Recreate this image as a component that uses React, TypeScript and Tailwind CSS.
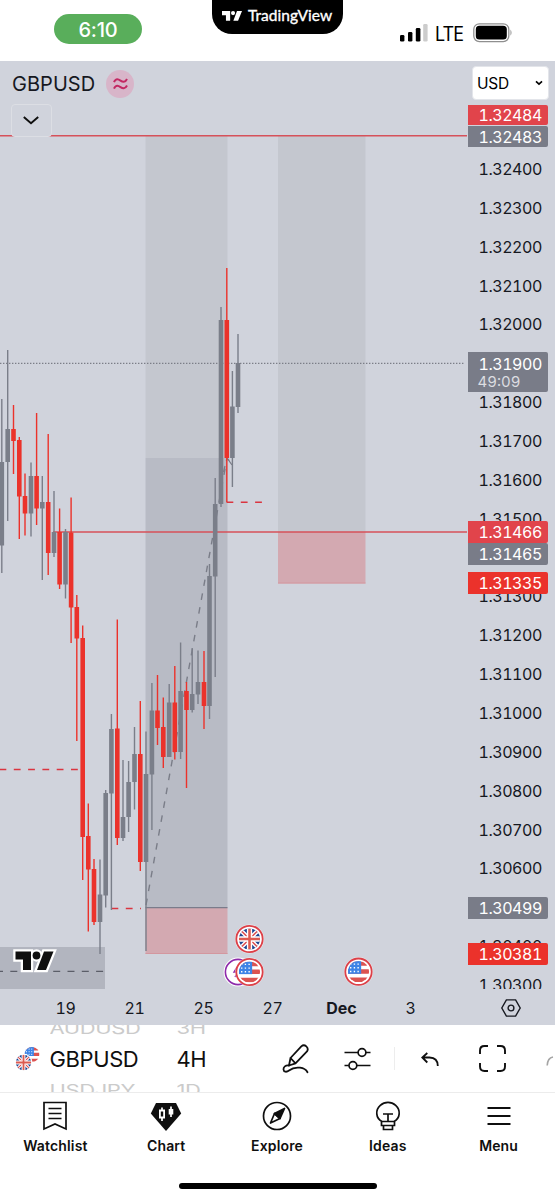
import type { ReactNode } from 'react';

type Candle = { x: number; high: number; low: number; top: number; bottom: number; up: boolean };

const UP = '#7a7e89';
const DOWN = '#eb322b';

// x, wick top, wick bottom, body top, body bottom, direction
const RAW: [number, number, number, number, number, 'u' | 'd'][] = [
  [1.8, 399, 573, 462, 545.5, 'u'],
  [7.7, 350, 521, 429, 462, 'u'],
  [13.5, 405, 474, 429, 441, 'd'],
  [19.3, 437, 539, 440, 496.5, 'd'],
  [25, 473.5, 535.5, 496, 513.5, 'd'],
  [31, 462.5, 536.5, 476, 513.5, 'u'],
  [36.6, 413, 525, 476, 508.5, 'd'],
  [42.3, 476, 580, 502, 508.5, 'u'],
  [48.2, 434, 575, 502, 553, 'd'],
  [54, 491, 557, 532, 553, 'u'],
  [59.6, 508.5, 589, 532, 584.5, 'd'],
  [65.5, 529, 598.5, 532, 584.5, 'u'],
  [71.1, 497.5, 643, 532.5, 607.5, 'd'],
  [76.8, 595, 741, 607, 638.5, 'd'],
  [82.7, 625.5, 880, 638, 837, 'd'],
  [88.3, 803.5, 931.5, 836, 869.5, 'd'],
  [94, 859, 925, 869, 922, 'd'],
  [100, 859.5, 954, 894.5, 922, 'u'],
  [105.7, 790, 907.5, 793, 895.5, 'u'],
  [111.4, 714, 910, 729, 793.5, 'u'],
  [117.3, 619.5, 845, 728.5, 838, 'd'],
  [123, 760, 841, 817, 838, 'u'],
  [128.6, 761, 832, 782, 817, 'u'],
  [134.5, 727, 809.5, 754, 782, 'u'],
  [140.3, 701, 871, 754, 862, 'd'],
  [146, 731.5, 951, 774, 862, 'u'],
  [151.9, 683, 830, 710.5, 774.5, 'u'],
  [157.5, 675, 745, 710.5, 728, 'd'],
  [163.3, 697.5, 768, 727, 757, 'd'],
  [169.2, 684, 757, 702.5, 757, 'u'],
  [174.8, 666, 759.5, 702.5, 752, 'd'],
  [180.6, 642.5, 759, 691, 752, 'u'],
  [186.5, 682, 788, 691, 710, 'd'],
  [192.2, 648, 712.5, 694, 710, 'u'],
  [198, 650.5, 704, 682, 694.5, 'u'],
  [204, 651, 729, 682, 706, 'd'],
  [209.5, 564, 719, 576, 706, 'u'],
  [215.2, 478, 677, 504, 576.5, 'u'],
  [221, 307, 507, 320, 504, 'u'],
  [226.8, 268, 502, 320, 458, 'd'],
  [232.4, 371, 487, 406.5, 458, 'u'],
  [238, 334, 413, 363, 407, 'u'],
];

const candles: Candle[] = RAW.map(([x, high, low, top, bottom, dir]) => ({
  x, high, low, top, bottom, up: dir === 'u',
}));

const ticks = Array.from({ length: 22 }, (_, i) => (1.324 - i * 0.001).toFixed(5));

const tags = [
  { price: '1.32484', place: 'top-[44px] h-[20px] bg-[#e1444b]' },
  { price: '1.32483', place: 'top-[65px] h-[21px] bg-[#797c88]' },
  { price: '1.31466', place: 'top-[460px] h-[22px] bg-[#e1444b]' },
  { price: '1.31465', place: 'top-[482px] h-[22px] bg-[#797c88]' },
  { price: '1.31335', place: 'top-[511px] h-[22px] bg-[#eb322b]' },
  { price: '1.30499', place: 'top-[836px] h-[22px] bg-[#797c88]' },
  { price: '1.30381', place: 'top-[882px] h-[22px] bg-[#eb322b]' },
];

function UkFlag({ id, r }: { id: string; r: number }) {
  return (
    <g>
      <clipPath id={id}><circle r={r} /></clipPath>
      <g clipPath={`url(#${id})`}>
        <g transform={`scale(${r / 10})`}>
          <rect x="-10" y="-10" width="20" height="20" fill="#1c4591" />
          <path d="M-10-10 10 10M10-10-10 10" stroke="#fff" strokeWidth="4" />
          <path d="M-10-10 10 10M10-10-10 10" stroke="#dc4a4c" strokeWidth="1.3" />
          <path d="M0-10V10M-10 0H10" stroke="#fff" strokeWidth="5" />
          <path d="M0-10V10M-10 0H10" stroke="#dc5a50" strokeWidth="2.4" />
        </g>
      </g>
    </g>
  );
}

function UsFlag({ id, r }: { id: string; r: number }) {
  return (
    <g>
      <clipPath id={id}><circle r={r} /></clipPath>
      <g clipPath={`url(#${id})`}>
        <g transform={`scale(${r / 10})`}>
          <rect x="-10" y="-10" width="20" height="20" fill="#fff" />
          <path d="M-10-7.6H10M-10-.2H10M-10 7.6H10" stroke="#dc5350" strokeWidth="4.2" />
          <rect x="-10" y="-10" width="12.5" height="12" fill="#3d84e6" />
          <path d="M-8-7.2H2M-8-3.7H2M-8-.2H2" stroke="#fff" strokeWidth="1.3" strokeDasharray="1.3 2.2" />
        </g>
      </g>
    </g>
  );
}

function EventPin({ x, y, children }: { x: number; y: number; children: ReactNode }) {
  return (
    <g transform={`translate(${x} ${y})`}>
      <circle r="14.6" fill="#fff" fillOpacity=".6" />
      <circle r="13.2" fill="#fff" stroke="#dc4048" strokeWidth="1.8" />
      {children}
    </g>
  );
}

// T, dot and slash of the brand mark on a 38x19 grid
function BrandShapes() {
  return (
    <>
      <path d="M0 0H15.5V18.5H7.5V8H0Z" />
      <circle cx="21" cy="4" r="3.9" />
      <path d="M28.5 0H38L30.5 18.5H21.5Z" />
    </>
  );
}

function Plot() {
  return (
    <svg className="block h-[928px] w-[467px]" viewBox="0 61 467 928">
      <rect x="145.5" y="135" width="82" height="323" fill="#c4c7cf" />
      <rect x="145.5" y="458" width="82" height="450" fill="#b8bbc5" />
      <rect x="145.5" y="908" width="82" height="46" fill="#d3a9b1" />
      <path d="M145.5 907.7H227.5" stroke="#7a7c8b" strokeWidth="1.2" />
      <path d="M145.5 953.5H227.5" stroke="#d3979f" strokeWidth="1" />
      <rect x="278" y="135" width="87.5" height="397" fill="#c4c7cf" />
      <rect x="278" y="532" width="87.5" height="51.5" fill="#d3a9b1" />
      <path d="M278 583H365.5" stroke="#d3979f" strokeWidth="1" />
      <rect x="0" y="947" width="105" height="42" fill="#b2b5bf" />
      <path d="M-4 971.3H105" stroke="#5b5e68" strokeWidth="1.2" strokeDasharray="7 7.3" />

      <path d="M0 135.8H467M53 532H467" stroke="#d6515a" strokeWidth="1.4" />
      <path d="M0 363.3H465" stroke="#7b7e87" strokeWidth="1.3" strokeDasharray="1.4 1.6" />
      <path d="M146 905 227 458 233 465" fill="none" stroke="#7a7d88" strokeWidth="1.4" strokeDasharray="6.5 7.6" />
      <g stroke="#da3540" strokeWidth="1.4" strokeDasharray="6.8 7.5">
        <path d="M-.5 769.5H79" />
        <path d="M111.5 908.5H141" />
        <path d="M226.5 502.3H263" />
      </g>

      {candles.map((c) => (
        <g key={c.x} fill={c.up ? UP : DOWN}>
          <rect x={c.x - 0.7} y={c.high} width="1.4" height={c.low - c.high} />
          <rect x={c.x - 2.3} y={c.top} width="4.6" height={c.bottom - c.top} />
        </g>
      ))}

      {/* last wiggle of the trend line stays visible over the bodies */}
      <path d="M223.5 472 225 466M228.5 460 232 465" stroke="#7a7d88" strokeWidth="1.3" />

      <g transform="translate(15.5 951.5)" fill="#0f0f0f">
        <g stroke="#fff" strokeWidth="4.5"><BrandShapes /></g>
        <BrandShapes />
      </g>

      <EventPin x={249.5} y={939}><UkFlag id="pin-uk" r={10.6} /></EventPin>
      <g transform="translate(238 972)">
        <circle r="14.4" fill="#fff" />
        <circle r="12.6" fill="#fff" stroke="#8e2bab" strokeWidth="1.6" />
        <path d="M-1-5-4 0H0L-3 5" fill="none" stroke="#8e2bab" strokeWidth="1.4" />
      </g>
      <EventPin x={249.5} y={972}><UsFlag id="pin-us-1" r={10.6} /></EventPin>
      <EventPin x={358.5} y={971.7}><UsFlag id="pin-us-2" r={10.6} /></EventPin>
    </svg>
  );
}

function StatusBar() {
  return (
    <header className="flex h-[61px] items-start">
      <div className="ml-[54px] mt-[14px] flex h-[30px] w-[88px] items-center justify-center rounded-full bg-[#59ae5b] pt-px text-[20px] font-medium tracking-[-0.2px] text-white">
        6:10
      </div>
      <div className="ml-[70px] flex h-[34px] w-[131px] items-center rounded-b-[20px] bg-black pl-[10px] text-white">
        <svg className="mt-[-3px] h-[10px] w-[20px] shrink-0" viewBox="0 0 38 19" fill="#fff" preserveAspectRatio="none">
          <BrandShapes />
        </svg>
        <span className="ml-[6px] mt-[-2px] whitespace-nowrap font-['Lato',sans-serif] text-[15.5px] leading-none tracking-[0.05px] [-webkit-text-stroke:0.35px_white]">
          TradingView
        </span>
      </div>
      <svg className="ml-[56px] mt-[23px] h-[19px] w-[29px]" viewBox="0 0 29 19">
        <rect x="1" y="12" width="4.4" height="6.5" rx="1.3" />
        <rect x="9" y="9" width="4.4" height="9.5" rx="1.3" />
        <rect x="16.8" y="5" width="4.6" height="13.5" rx="1.3" />
        <rect x="24.2" y="1" width="4.4" height="17.5" rx="1.3" fill="#ccc" />
      </svg>
      <span className="ml-[7px] mt-[22px] w-[28.5px] origin-left scale-x-[0.92] text-[19.5px] leading-6 tracking-[-1px]">LTE</span>
      <svg className="ml-[9px] mt-[23px] h-[20px] w-[40px]" viewBox="0 0 40 20">
        <rect x=".8" y=".8" width="35" height="17.8" rx="5.5" fill="#fff" stroke="#8f8f8f" strokeWidth="1.3" />
        <rect x="2.8" y="2.8" width="31" height="13.8" rx="3.6" />
        <path d="M37.5 6.5Q39.5 9.7 37.5 12.8Z" fill="#888" />
      </svg>
    </header>
  );
}

function PriceScale() {
  return (
    <div className="relative h-[928px] w-[88px] overflow-hidden text-[16px] tabular-nums tracking-[-0.45px] text-[#16181f]">
      <div className="ml-[5px] mt-[5px] flex h-[34px] w-[77px] items-center justify-between rounded-[4px] border border-[#e3e5ea] bg-white pl-[4px] pr-[5px] text-[15.5px] tracking-[-0.3px] text-black">
        <span className="mt-px">USD</span>
        <svg className="h-[6px] w-[8px]" viewBox="0 0 8 6" fill="none" stroke="#000" strokeWidth="1.6">
          <path d="M1 1.3 4 4.2 7 1.3" />
        </svg>
      </div>
      <div className="mt-[49.6px] flex flex-col">
        {ticks.map((t) => (
          <span key={t} className="flex h-[38.86px] shrink-0 items-center pl-[11.5px]">{t}</span>
        ))}
      </div>

      {tags.map((t) => (
        <div key={t.price} className={`absolute left-[1px] flex w-[80px] items-center rounded-r-[2px] pl-[10.5px] text-white ${t.place}`}>
          {t.price}
        </div>
      ))}
      <div className="absolute left-[1px] top-[291px] flex h-[40px] w-[80px] flex-col justify-center rounded-r-[2px] bg-[#797c88] pl-[10.5px] leading-[18px] text-white">
        <span className="mt-[2px]">1.31900</span>
        <span className="-ml-px text-[15px] tracking-normal text-[#dcdde1]">49:09</span>
      </div>
    </div>
  );
}

function ChartArea() {
  return (
    <section className="h-[964px] bg-[#d0d3dc]">
      <div className="relative flex">
        <Plot />
        <PriceScale />
        <div className="absolute left-[12px] top-[8px] flex items-center gap-[10px]">
          <span className="w-[84px] text-[20px] tracking-[0.05px] text-[#16181f]">GBPUSD</span>
          <span className="flex size-[28px] items-center justify-center rounded-full bg-[#d8b5c9]">
            <svg className="h-[12px] w-[15px]" viewBox="0 0 15 12" fill="none" stroke="#c32862" strokeWidth="2">
              <path d="M1 4.2C3-.2 5.5 1.2 7.5 2.6S12 5 14 1M1 10.7C3 6.3 5.5 7.7 7.5 9.1S12 11.5 14 7.5" />
            </svg>
          </span>
        </div>
        <div className="absolute left-[11px] top-[43px] flex h-[33px] w-[41px] items-center justify-center rounded-[4px] border border-[#dcdee4] bg-[#d0d3dc] pr-[1px]">
          <svg className="h-[9px] w-[16px]" viewBox="0 0 16 9" fill="none" stroke="#0f0f0f" strokeWidth="1.9">
            <path d="M.8 1 8 7.3 15.2 1" />
          </svg>
        </div>
      </div>
      <div className="flex h-[36px] items-center pl-[31px] pt-[2px] text-[16px] text-[#16181f]">
        {['19', '21', '25', '27', 'Dec', '3'].map((d) => (
          <span key={d} className={d === 'Dec' ? 'w-[69px] text-center font-bold' : 'w-[69px] text-center tabular-nums tracking-[-0.4px]'}>{d}</span>
        ))}
        <svg className="ml-[56px] h-[18px] w-[20px]" viewBox="0 0 20 18" fill="none" stroke="#16181f" strokeWidth="1.4">
          <path d="M5.4.9H14.6L19.2 9 14.6 17.1H5.4L.8 9Z" />
          <circle cx="10" cy="9" r="2.9" />
        </svg>
      </div>
    </section>
  );
}

function Wheel({ items, className }: { items: string[]; className: string }) {
  return (
    <div className={`flex h-[67px] flex-col justify-center overflow-hidden whitespace-nowrap pt-[2px] text-[22px] leading-[31px] ${className}`}>
      <span className="h-[31px] shrink-0 scale-y-[0.72] text-[#cbcbcb]">{items[0]}</span>
      <span className="h-[31px] shrink-0 text-[#0f0f0f]">{items[1]}</span>
      <span className="h-[31px] shrink-0 scale-y-[0.72] text-[#cbcbcb]">{items[2]}</span>
    </div>
  );
}

function Toolbar() {
  return (
    <div className="flex h-[68px] items-center overflow-hidden border-b border-[#ececec]">
      <svg className="ml-[15px] h-[26px] w-[26px] shrink-0" viewBox="0 0 26 26">
        <g transform="translate(17 8.5)"><UsFlag id="bar-us" r={7.5} /></g>
        <circle cx="8.5" cy="16.5" r="9" fill="#fff" />
        <g transform="translate(8.5 16.5)"><UkFlag id="bar-uk" r={7.7} /></g>
      </svg>
      <Wheel items={['AUDUSD', 'GBPUSD', 'USDJPY']} className="ml-[8.5px] w-[96px] shrink-0 tracking-[-0.4px]" />
      <Wheel items={['3H', '4H', '1D']} className="ml-[31px] w-[40px] shrink-0 tracking-[-0.35px]" />
      <svg className="ml-[65.5px] h-[30px] w-[28px] shrink-0" viewBox="0 0 28 30" fill="none" stroke="#0f0f0f" strokeWidth="1.8" strokeLinejoin="round" strokeLinecap="round">
        <path d="M8.5 14 19.3 2.400Q21.8.2 24.3 2.400T25 7.400L13.5 19.3 7 21.500ZM8.5 14 13.5 19.300" />
        <path d="M7 21.5C3.5 21 1.3 23 1.5 25.5S4.5 28.5 7 26.5C10.5 23.8 14.5 23.2 18 23.7S24 25.5 25.5 28.2" />
      </svg>
      <svg className="ml-[33.5px] mt-px h-[24px] w-[28px] shrink-0" viewBox="0 0 28 24" fill="none" stroke="#0f0f0f" strokeWidth="1.7">
        <path d="M.5 5.5H14M22 5.5H26.5M.5 18.5H4.8M13 18.5H26.5" />
        <circle cx="18" cy="5.5" r="3.9" />
        <circle cx="8.9" cy="18.5" r="3.9" />
      </svg>
      <div className="ml-[22px] h-[23px] w-px shrink-0 bg-[#ededed]" />
      <svg className="ml-[26px] mt-[2px] h-[15px] w-[18px] shrink-0" viewBox="0 0 18 15" fill="none" stroke="#0f0f0f" strokeWidth="1.8">
        <path d="M6.3 1 1.3 5.5 6.3 10.5M1.3 5.5H8.5Q16.8 5.7 16.8 14" />
      </svg>
      <svg className="ml-[40px] h-[27px] w-[27px] shrink-0" viewBox="0 0 27 27" fill="none" stroke="#0f0f0f" strokeWidth="1.9">
        <path d="M1 9V5.5Q1 1 5.5 1H9M18 1H21.5Q26 1 26 5.5V9M26 18V21.5Q26 26 21.5 26H18M9 26H5.5Q1 26 1 21.5V18" />
      </svg>
      <svg className="ml-[40px] mt-[2px] h-[16px] w-[8px] shrink-0" viewBox="0 0 8 16" fill="none" stroke="#a5a5a5" strokeWidth="1.6">
        <path d="M1.2 13.5Q1.5 6 7 5" />
      </svg>
    </div>
  );
}

function NavIcon({ name }: { name: string }) {
  const base = { className: 'h-[30px] w-[32px]', viewBox: '0 0 32 30', fill: 'none', stroke: '#0f0f0f', strokeWidth: 1.7 };
  switch (name) {
    case 'Watchlist':
      return (
        <svg {...base}>
          <path d="M5 1.500H27V28L16 23 5 28ZM9.500 7.500H22.500M9.500 12.500H22.500M9.500 17.500H22.500" />
        </svg>
      );
    case 'Chart':
      return (
        <svg {...base}>
          <path d="M6 2H26L31.2 12.5 16 30 .8 12.5Z" fill="#0f0f0f" stroke="none" />
          <path d="M12 6.5V9.5M12 16.5V20M21 5.5V16" stroke="#fff" />
          <path d="M9.9 9.5H14.1V16.5H9.900Z" stroke="#fff" strokeWidth="1.8" />
          <path d="M18.7 8H23.3V13.5H18.7Z" fill="#fff" stroke="none" />
        </svg>
      );
    case 'Explore':
      return (
        <svg {...base}>
          <circle cx="16" cy="15" r="13.5" />
          <path d="M23.5 7.5 19 17.5 13.5 12.5Z" fill="#0f0f0f" strokeLinejoin="round" />
          <path d="M13.5 12.5 19 17.5 9.5 22Z" strokeLinejoin="round" />
        </svg>
      );
    case 'Ideas':
      return (
        <svg {...base}>
          <path d="M10 20.5C3.5 17 3.2 8.900 8.300 4.400A11.500 11.500 0 0 1 23.700 4.400C28.700 9 28.500 17 22 20.500ZM9.500 20.500V24.500H22.500V20.500M11.500 24.500V28.500H20.500V24.500M11 13H21M16 13V20.500" />
        </svg>
      );
    default:
      return (
        <svg {...base}>
          <path d="M4.5 7H27.5M4.5 15H27.5M4.5 23H27.5" strokeWidth="1.8" />
        </svg>
      );
  }
}

function BottomNav() {
  return (
    <nav className="flex h-[107px] flex-col">
      <div className="grid w-[554px] grid-cols-5 pt-[8px]">
        {['Watchlist', 'Chart', 'Explore', 'Ideas', 'Menu'].map((name) => (
          <div key={name} className="flex flex-col items-center">
            <NavIcon name={name} />
            <span className="mt-[5px] text-[14px] font-semibold leading-5 tracking-[0.15px] text-[#0f0f0f]">{name}</span>
          </div>
        ))}
      </div>
      <div className="mx-auto mt-[27px] h-[6px] w-[198px] rounded-full bg-black" />
    </nav>
  );
}

export default function App() {
  return (
    <div className="h-[1200px] w-[555px] overflow-hidden bg-white font-['Inter','Liberation_Sans',sans-serif] text-black">
      <StatusBar />
      <ChartArea />
      <Toolbar />
      <BottomNav />
    </div>
  );
}
